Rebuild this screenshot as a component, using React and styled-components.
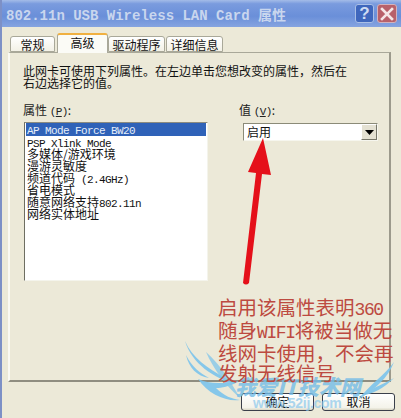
import React from 'react';
import styled, { createGlobalStyle } from 'styled-components';

const GlobalStyle = createGlobalStyle`
    html, body {
        margin: 0;
        padding: 0;
        background: #ece9d8;
    }
`;

const cjk = `"Noto Sans CJK SC", "DejaVu Sans", sans-serif`;
const mono = `"Liberation Mono", "Noto Sans CJK SC", monospace`;

const properties = [
    [['AP Mode Force BW20', true]],
    [['PSP Xlink Mode', true]],
    [['多媒体/游戏环境', false]],
    [['漫游灵敏度', false]],
    [['频道代码', false], [' (2.4GHz)', true]],
    [['省电模式', false]],
    [['随意网络支持', false], ['802.11n', true]],
    [['网络实体地址', false]],
];

const tabs = [
    { label: '常规', width: 45, gap: 2 },
    { label: '高级', width: 51, active: true, gap: 0 },
    { label: '驱动程序', width: 57, gap: 1 },
    { label: '详细信息', width: 57, gap: 0 },
];

const App = () => (
    <Window>
        <GlobalStyle />
        <TitleBar>
            <Title>
                802.11n USB Wireless LAN Card <TitleCjk>属性</TitleCjk>
            </Title>
            <HelpButton>?</HelpButton>
            <CloseButton>
                <svg width="14" height="14" viewBox="0 0 14 14">
                    <path d="M2 2 L12 12 M12 2 L2 12" stroke="#f4e6e6" strokeWidth="2.6" strokeLinecap="square" />
                </svg>
            </CloseButton>
        </TitleBar>
        <Body>
            <Tabs>
                {tabs.map((tab) => (
                    <Tab key={tab.label} $active={tab.active} $width={tab.width} $gap={tab.gap}>
                        {tab.label}
                    </Tab>
                ))}
            </Tabs>
            <Page>
                <Intro>
                    此网卡可使用下列属性。在左边单击您想改变的属性，然后在
                    <br />
                    右边选择它的值。
                </Intro>
                <Columns>
                    <div>
                        <FieldLabel>
                            属性 <Lat>(<u>P</u>)</Lat>:
                        </FieldLabel>
                        <ListBox>
                            {properties.map((parts, i) => (
                                <ListItem key={i} $selected={i === 0}>
                                    {parts.map(([text, latin]) =>
                                        latin ? <Lat key={text}>{text}</Lat> : <span key={text}>{text}</span>
                                    )}
                                </ListItem>
                            ))}
                        </ListBox>
                    </div>
                    <ValueColumn>
                        <FieldLabel>
                            值 <Lat>(<u>V</u>)</Lat>:
                        </FieldLabel>
                        <Select>
                            <SelectText>启用</SelectText>
                            <DropButton>
                                <svg width="9" height="5" viewBox="0 0 9 5">
                                    <path d="M0 0 H9 L4.5 5 Z" fill="#000" />
                                </svg>
                            </DropButton>
                        </Select>
                    </ValueColumn>
                </Columns>
            </Page>
            <Footer>
                <DialogButton>确定</DialogButton>
                <DialogButton>取消</DialogButton>
            </Footer>
        </Body>

        <Markup width="401" height="418" viewBox="0 0 401 418">
            <path d="M263 138 L271 175 L262 174 L249 283 Q246 286 243 283 L256 173 L248 172 Z" fill="#e5101a" />
            <g fill="#7cc4ec" opacity="0.9">
                <path d="M185 341 C192 358 208 368 225 378 L235 384 C214 378 192 364 185 341 Z" />
                <path d="M186 355 C192 367 200 373 209 378 C197 376 189 368 186 355 Z" />
                <path d="M198 379 C208 384 222 384 240 381 C228 387 222 388 216 388 C224 396 232 399 240 400 C226 402 208 394 198 379 Z" />
                <path d="M206 352 C222 366 232 384 240 398 C226 386 214 370 206 352 Z" opacity="0.8" />
                <path d="M394 362 C388 378 376 388 358 400 C372 382 384 376 394 362 Z" />
                <path d="M394 378 C384 388 374 394 360 396 C372 388 384 384 394 378 Z" />
            </g>
        </Markup>
        <WatermarkName>我爱IT技术网</WatermarkName>
        <WatermarkUrl>www.52ij.com</WatermarkUrl>
        <Note>
            启用该属性表明<NoteLat>360</NoteLat>
            <br />
            随身<NoteLat>WIFI</NoteLat>将被当做无
            <br />
            线网卡使用，不会再
            <br />
            发射无线信号
        </Note>
    </Window>
);

const Window = styled.div`
    position: relative;
    width: 401px;
    height: 418px;
    overflow: hidden;
    background: #ece9d8;
    box-sizing: border-box;
    border-left: 2px solid #7d90c6;
    font-family: ${cjk};
`;

const TitleBar = styled.div`
    display: flex;
    align-items: center;
    height: 27px;
    margin-left: -2px;
    padding: 0 4px 0 6px;
    box-sizing: border-box;
    background: linear-gradient(180deg, #a4bce8 0%, #7a9bde 14%, #6a8fd9 60%, #86a4e0 100%);
`;

const Title = styled.div`
    flex: 1;
    color: #c9d6ee;
    font: bold 14px ${mono};
    white-space: pre;
`;

const TitleCjk = styled.span`
    font-family: ${cjk};
    font-size: 14px;
`;

const HelpButton = styled.div`
    display: flex;
    align-items: center;
    justify-content: center;
    width: 19px;
    height: 19px;
    margin-right: 3px;
    box-sizing: border-box;
    border: 1px solid #a9bfe6;
    border-radius: 3px;
    background: #3f67bd;
    color: #cfdcf3;
    font: bold 17px "Liberation Sans", sans-serif;
`;

const CloseButton = styled(HelpButton)`
    width: 20px;
    margin-right: 0;
    background: #b8616a;
    border-color: #d2b2bd;
`;

const Body = styled.div`
    padding: 5px 8px 0 6px;
`;

const Tabs = styled.div`
    display: flex;
    align-items: flex-end;
    height: 20px;
    padding-left: 2px;
`;

const Tab = styled.div`
    width: ${(p) => p.$width}px;
    height: ${(p) => (p.$active ? 20 : 16)}px;
    box-sizing: border-box;
    margin-right: ${(p) => p.$gap}px;
    margin-bottom: ${(p) => (p.$active ? -1 : 0)}px;
    position: relative;
    z-index: ${(p) => (p.$active ? 2 : 1)};
    border: 1px solid #a9a899;
    border-bottom: ${(p) => (p.$active ? 'none' : '1px solid #a9a899')};
    border-top: ${(p) => (p.$active ? '2px solid #f0b040' : '1px solid #a9a899')};
    border-radius: 3px 3px 0 0;
    background: ${(p) => (p.$active ? '#fbfbf6' : 'linear-gradient(180deg, #ffffff 0%, #f3f1e6 100%)')};
    color: #111;
    font-size: 12px;
    line-height: 15px;
    text-align: center;
    white-space: nowrap;
`;

const Page = styled.div`
    height: 330px;
    width: 383px;
    box-sizing: border-box;
    padding: 12px 13px 0 13px;
    background: #ece9d8;
    border: 1px solid #9c9a8c;
    border-left: 2px solid #fbfaf3;
    border-top: 1px solid #a9a899;
    border-bottom: 2px solid #8f8d80;
    border-right: 2px solid #9c9a8c;
`;

const Intro = styled.div`
    color: #111;
    font-size: 12px;
    line-height: 12px;
    white-space: nowrap;
`;

const Columns = styled.div`
    display: flex;
    margin-top: 14px;
`;

const FieldLabel = styled.div`
    color: #222;
    font-size: 12px;
    line-height: 14px;
    white-space: nowrap;
`;

const Lat = styled.span`
    font-family: ${mono};
    font-size: 11px;
    letter-spacing: -0.6px;
`;

const ListBox = styled.div`
    width: 184px;
    height: 159px;
    margin: 3px 0 0 1px;
    box-sizing: border-box;
    padding: 0 1px;
    background: #fff;
    border: 1px solid #8b8b80;
    border-color: #8b8b80 #f4f4ec #f4f4ec #6e6e62;
`;

const ListItem = styled.div`
    padding-left: 1px;
    line-height: 12px;
    height: ${(p) => (p.$selected ? 13 : 12)}px;
    font-size: 12px;
    white-space: pre;
    color: ${(p) => (p.$selected ? '#e6eefa' : '#111')};
    background: ${(p) => (p.$selected ? '#2f62b8' : 'transparent')};
`;

const ValueColumn = styled.div`
    margin-left: 31px;
`;

const Select = styled.div`
    display: flex;
    width: 135px;
    height: 18px;
    margin: 4px 0 0 4px;
    box-sizing: border-box;
    background: #fff;
    border: 1px solid #8b8b78;
    border-bottom-color: #f6f6ee;
    border-right-color: #f6f6ee;
`;

const SelectText = styled.div`
    flex: 1;
    padding-left: 3px;
    color: #111;
    font-size: 12px;
    line-height: 16px;
`;

const DropButton = styled.div`
    display: flex;
    align-items: center;
    justify-content: center;
    width: 16px;
    box-sizing: border-box;
    background: #e4e1d2;
    border: 1px solid #fff;
    border-right-color: #77776a;
    border-bottom-color: #77776a;
`;

const Footer = styled.div`
    display: flex;
    justify-content: flex-end;
    gap: 8px;
    margin: 11px -2px 0 0;
`;

const DialogButton = styled.div`
    width: 73px;
    height: 18px;
    box-sizing: border-box;
    border: 1px solid #3a3f4a;
    border-radius: 3px;
    background: linear-gradient(180deg, #ffffff 0%, #f4f3ea 85%, #d9d6c4 100%);
    color: #111;
    font-size: 12px;
    line-height: 16px;
    text-align: center;
`;

const Markup = styled.svg`
    position: absolute;
    left: -2px;
    top: 0;
    pointer-events: none;
`;

const Note = styled.div`
    position: absolute;
    left: 216px;
    top: 297px;
    color: #bd4a40;
    font-size: 19.5px;
    line-height: 20px;
    white-space: nowrap;
`;

const NoteLat = styled.span`
    font-family: ${mono};
    font-size: 18px;
    letter-spacing: -1.4px;
`;

const WatermarkName = styled.div`
    position: absolute;
    left: 233px;
    top: 374px;
    color: #74bde8;
    font-size: 21px;
    line-height: 24px;
    font-weight: 900;
    font-style: italic;
    white-space: nowrap;
    opacity: 0.8;
`;

const WatermarkUrl = styled.div`
    position: absolute;
    left: 251px;
    top: 395px;
    color: #8cc8ec;
    font: bold 14px "Liberation Sans", sans-serif;
    letter-spacing: -0.3px;
    white-space: nowrap;
    opacity: 0.7;
`;

export default App;
